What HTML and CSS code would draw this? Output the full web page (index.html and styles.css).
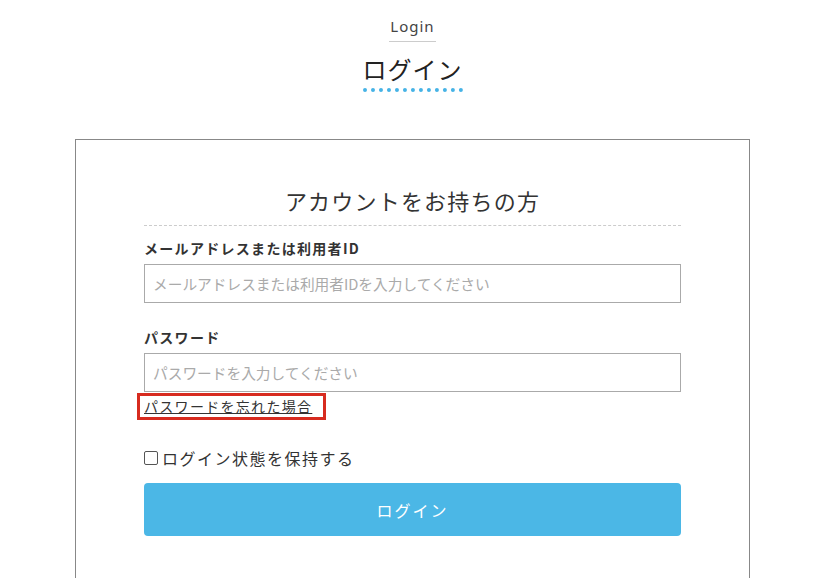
FILE: index.html
```html
<!DOCTYPE html>
<html lang="ja">
<head>
<meta charset="utf-8">
<link rel="stylesheet" href="styles.css">
</head>
<body>
<div class="page">
  <div class="heading">
    <div class="en">Login</div>
    <h1 class="ja">ログイン</h1>
  </div>
  <div class="card">
    <h2 class="card-title">アカウントをお持ちの方</h2>
    <form class="form">
      <label class="label">メールアドレスまたは利用者ID</label>
      <input class="input" type="text" placeholder="メールアドレスまたは利用者IDを入力してください">
      <label class="label label-pw">パスワード</label>
      <input class="input" type="password" placeholder="パスワードを入力してください">
      <div class="forgot-row"><a class="forgot" href="#">パスワードを忘れた場合</a></div>
      <label class="keep"><span class="box"></span>ログイン状態を保持する</label>
      <button class="btn" type="button">ログイン</button>
    </form>
  </div>
</div>
</body>
</html>
```
FILE: styles.css
```css
* { box-sizing: border-box; }
html, body { margin: 0; padding: 0; background: #fff; }
body {
  font-family: "Noto Sans CJK JP", "Noto Sans", sans-serif;
  color: #333;
  overflow: hidden;
}
.page {
  width: 825px;
  display: flex;
  flex-direction: column;
  align-items: center;
  padding-top: 15px;
}
.heading {
  display: flex;
  flex-direction: column;
  align-items: center;
}
.en {
  font-family: "Noto Sans", sans-serif;
  font-size: 15px;
  letter-spacing: 1px;
  color: #444;
  line-height: 22px;
  padding: 0 1px 4px;
  border-bottom: 1px solid #ccc;
}
.ja {
  margin: 10px 0 0;
  font-size: 24px;
  font-weight: 400;
  letter-spacing: 1px;
  color: #222;
  line-height: 34px;
  padding-bottom: 2px;
  border-bottom: 4px dotted #46b3e6;
}
.card {
  margin-top: 47px;
  width: 675px;
  height: 460px;
  border: 1px solid #888;
  padding: 38px 68px 0;
}
.card-title {
  margin: 0;
  text-align: center;
  font-size: 22px;
  font-weight: 400;
  letter-spacing: 1.2px;
  color: #333;
  line-height: 44px;
  border-bottom: 1px dashed #ccc;
  padding-bottom: 3px;
}
.form {
  display: flex;
  flex-direction: column;
}
.label {
  margin-top: 10px;
  font-size: 14px;
  font-weight: 700;
  letter-spacing: 1.3px;
  color: #333;
  line-height: 24px;
  margin-bottom: 4px;
}
.label-pw { margin-top: 22px; }
.input {
  width: 100%;
  height: 39px;
  border: 1px solid #aaa;
  padding: 0 8px;
  font-family: "Noto Sans CJK JP", sans-serif;
  font-size: 14.7px;
  color: #333;
  outline: none;
}
.input::placeholder { color: #aaa; }
.forgot-row {
  margin-left: -7px;
  margin-top: 1px;
  display: flex;
}
.forgot {
  display: inline-block;
  border: 3px solid #d72b1f;
  padding: 0 11px 0 4px;
  font-size: 14px;
  line-height: 21px;
  letter-spacing: 1.3px;
  color: #333;
  text-decoration: underline;
}
.keep {
  margin-top: 26px;
  display: flex;
  align-items: center;
  font-size: 16px;
  letter-spacing: 1.5px;
  color: #333;
  line-height: 24px;
}
.box {
  width: 14px;
  height: 14px;
  border: 1px solid #555;
  border-radius: 2px;
  margin-right: 4px;
}
.btn {
  margin-top: 13px;
  height: 53px;
  width: 100%;
  border: none;
  border-radius: 4px;
  background: #4bb7e6;
  color: #fff;
  font-family: "Noto Sans CJK JP", sans-serif;
  font-size: 16px;
  letter-spacing: 2px;
}
```
